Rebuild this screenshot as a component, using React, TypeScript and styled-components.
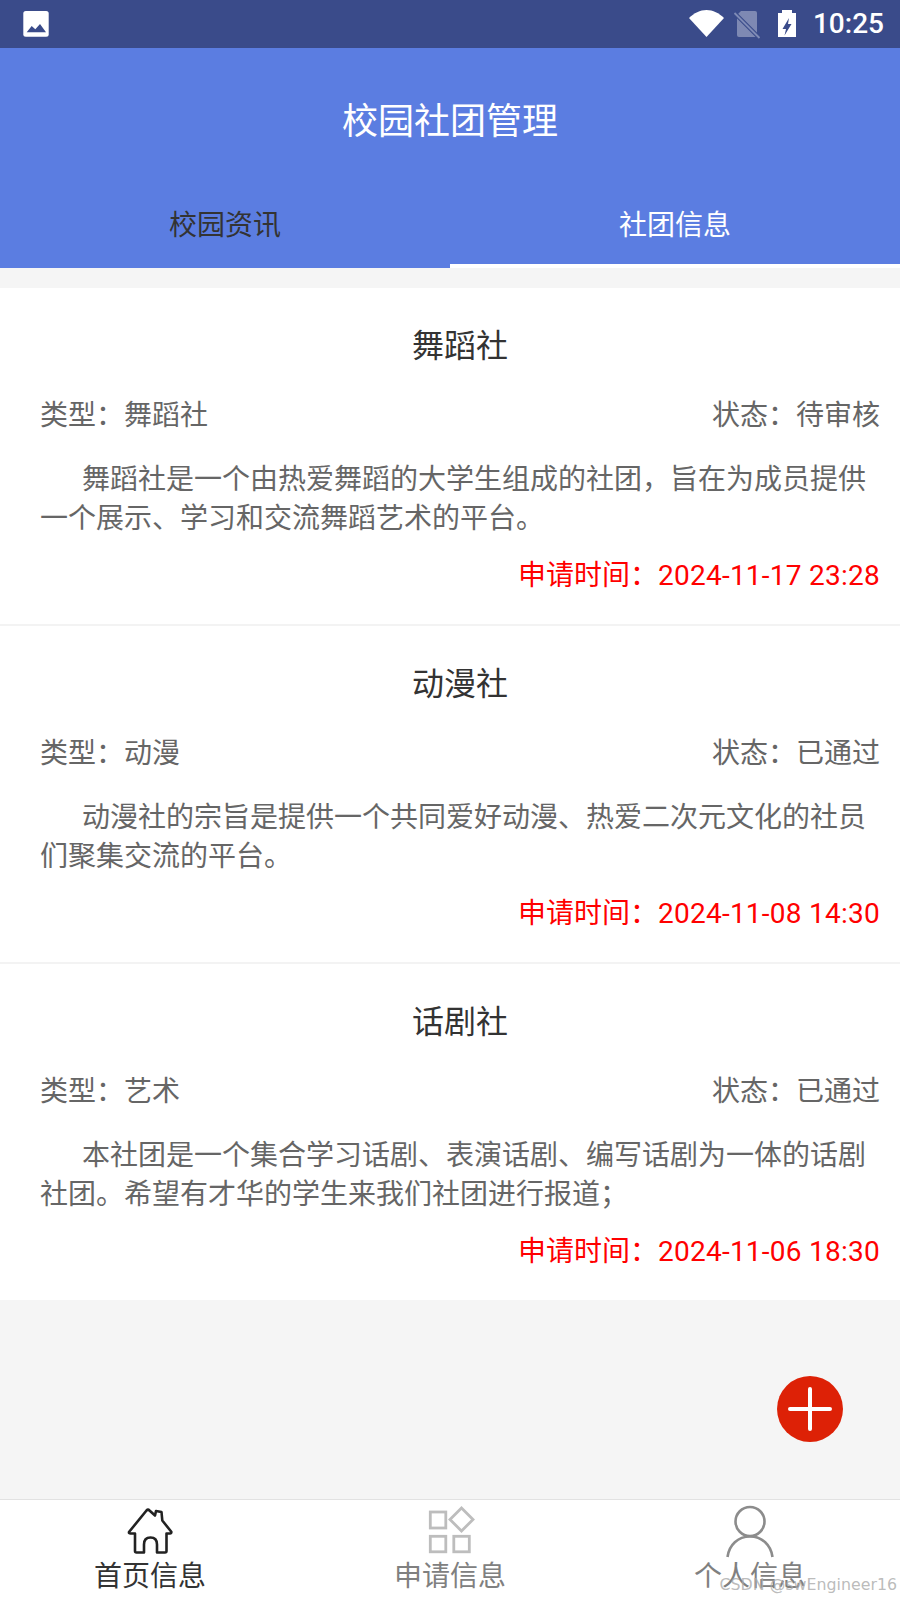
import React from "react";
import styled, { createGlobalStyle } from "styled-components";

const Global = createGlobalStyle`
  html, body { margin: 0; padding: 0; background: #f5f5f5; }
  * { box-sizing: border-box; }
`;

const Screen = styled.div`
  position: relative;
  width: 900px;
  height: 1600px;
  display: flex;
  flex-direction: column;
  overflow: hidden;
  background: #f5f5f5;
  font-family: Roboto, "Noto Sans CJK SC", sans-serif;
  font-size: 28px;
`;

const StatusBar = styled.div`
  height: 48px;
  flex: none;
  background: #3a4b8a;
  display: flex;
  align-items: center;
  justify-content: space-between;
  padding: 0 16px 0 20px;
`;

const StatusRight = styled.div`
  display: flex;
  align-items: center;
`;

const StatusIcon = styled.svg<{ $gap?: number }>`
  display: block;
  flex: none;
  margin-left: ${(p) => p.$gap ?? 0}px;
`;

const Clock = styled.span`
  color: #fff;
  font-size: 28px;
  font-weight: 500;
  line-height: 48px;
  margin-left: 17px;
`;

const Header = styled.header`
  flex: none;
  background: #5b7de1;
`;

const AppTitle = styled.h1`
  margin: 0;
  height: 144px;
  padding-bottom: 4px;
  display: flex;
  align-items: center;
  justify-content: center;
  color: #fff;
  font-size: 36px;
  font-weight: 400;
`;

const Tabs = styled.nav`
  display: flex;
  height: 76px;
`;

const Tab = styled.div<{ $active?: boolean }>`
  flex: 1;
  display: flex;
  align-items: center;
  justify-content: center;
  padding-bottom: ${(p) => (p.$active ? "10px" : "14px")};
  color: ${(p) => (p.$active ? "#fff" : "#333")};
  border-bottom: ${(p) => (p.$active ? "4px solid #fff" : "none")};
`;

const List = styled.main`
  flex: 1;
  padding-top: 20px;
`;

const Card = styled.article`
  background: #fff;
  padding: 33px 20px 28px 40px;
  & + & {
    border-top: 2px solid #f3f3f3;
  }
`;

const CardTitle = styled.h2`
  margin: 0;
  text-align: center;
  color: #333;
  font-size: 32px;
  font-weight: 400;
  line-height: 50px;
`;

const MetaRow = styled.div`
  display: flex;
  justify-content: space-between;
  margin-top: 25px;
  line-height: 40px;
  color: #666;
`;

const Description = styled.p`
  margin: 24px 0 0;
  color: #666;
  line-height: 39px;
  text-indent: 42px;
`;

const AppliedAt = styled.div`
  margin-top: 18px;
  text-align: right;
  color: #f00;
  line-height: 40px;
`;

const AppliedDate = styled.span`
  letter-spacing: 0.25px;
`;

const Fab = styled.button`
  position: absolute;
  left: 777px;
  top: 1376px;
  width: 66px;
  height: 66px;
  padding: 0;
  border: none;
  border-radius: 50%;
  background: #dd2106;
  display: flex;
  align-items: center;
  justify-content: center;
`;

const BottomBar = styled.footer`
  flex: none;
  height: 101px;
  display: flex;
  background: #fff;
  border-top: 1px solid #e2e2e2;
`;

const NavItem = styled.div<{ $active?: boolean }>`
  flex: 1;
  display: flex;
  flex-direction: column;
  align-items: center;
  color: ${(p) => (p.$active ? "#333" : "#808080")};
  line-height: 34px;
`;

const NavIcon = styled.svg`
  display: block;
  flex: none;
`;

const Watermark = styled.div`
  position: absolute;
  right: 3px;
  bottom: 3px;
  font-family: "DejaVu Sans", sans-serif;
  font-size: 15.8px;
  line-height: 24px;
  color: rgba(170, 170, 170, 0.8);
`;

const clubs = [
  {
    name: "舞蹈社",
    type: "舞蹈社",
    status: "待审核",
    desc: "舞蹈社是一个由热爱舞蹈的大学生组成的社团，旨在为成员提供一个展示、学习和交流舞蹈艺术的平台。",
    time: "2024-11-17 23:28",
  },
  {
    name: "动漫社",
    type: "动漫",
    status: "已通过",
    desc: "动漫社的宗旨是提供一个共同爱好动漫、热爱二次元文化的社员们聚集交流的平台。",
    time: "2024-11-08 14:30",
  },
  {
    name: "话剧社",
    type: "艺术",
    status: "已通过",
    desc: "本社团是一个集合学习话剧、表演话剧、编写话剧为一体的话剧社团。希望有才华的学生来我们社团进行报道；",
    time: "2024-11-06 18:30",
  },
];

export default function App() {
  return (
    <Screen>
      <Global />
      <StatusBar>
        <StatusIcon width="30" height="30" viewBox="0 0 30 30">
          <rect x="3.300" y="2" width="25.400" height="25.700" rx="2.500" fill="#fff" />
          <path d="M6.700 23.300l5-6.300 3.600 3.300 4.700-5.300 6 8.300z" fill="#3a4b8a" />
        </StatusIcon>
        <StatusRight>
          <StatusIcon width="38" height="32" viewBox="0 0 38 32">
            <path d="M1 10C6 5 12 2 18.500 2S31 5 36 10L18.500 29z" fill="#fff" />
          </StatusIcon>
          <StatusIcon $gap={7} width="28" height="32" viewBox="0 0 28 32">
            <path d="M8 3h14a2 2 0 0 1 2 2v22a2 2 0 0 1-2 2H6a2 2 0 0 1-2-2V7z" fill="#fff" opacity="0.35" />
            <path d="M1.500 5L26.500 30" stroke="#3a4b8a" strokeWidth="4" />
            <path d="M1.500 5L26.500 30" stroke="#7f8cb6" strokeWidth="1.800" />
          </StatusIcon>
          <StatusIcon $gap={17} width="18" height="32" viewBox="0 0 18 32">
            <path d="M4 2h10v3h4v24H0V5h4z" fill="#fff" />
            <path d="M11 10L4.500 21H8l-1.500 6.500L13.500 16H10z" fill="#3a4b8a" />
          </StatusIcon>
          <Clock>10:25</Clock>
        </StatusRight>
      </StatusBar>

      <Header>
        <AppTitle>校园社团管理</AppTitle>
        <Tabs>
          <Tab>校园资讯</Tab>
          <Tab $active>社团信息</Tab>
        </Tabs>
      </Header>

      <List>
        {clubs.map((c) => (
          <Card key={c.name}>
            <CardTitle>{c.name}</CardTitle>
            <MetaRow>
              <span>类型：{c.type}</span>
              <span>状态：{c.status}</span>
            </MetaRow>
            <Description>{c.desc}</Description>
            <AppliedAt>
              申请时间：<AppliedDate>{c.time}</AppliedDate>
            </AppliedAt>
          </Card>
        ))}
      </List>

      <Fab aria-label="添加">
        <svg width="44" height="44" viewBox="0 0 44 44">
          <path d="M22 2v40M2 22h40" stroke="#fff" strokeWidth="4" strokeLinecap="round" />
        </svg>
      </Fab>

      <BottomBar>
        <NavItem $active>
          <NavIcon width="60" height="60" viewBox="0 0 60 60" fill="none">
            <path
              d="M9 32l17.500-21.500q1.500-1.500 3 0L35 15.500l1-4.500 5.500 1 .8 8.500 9 11.300q.3 1.700-1.300 1.700h-3.500v17.500q0 1.500-1.500 1.500H37v-8q0-7-6.500-7t-6.500 7v8h-7.500q-1.500 0-1.500-1.500V33.500H10.500q-1.800 0-1.500-1.500z"
              stroke="#222"
              strokeWidth="2.600"
              strokeLinejoin="round"
            />
          </NavIcon>
          首页信息
        </NavItem>
        <NavItem>
          <NavIcon width="60" height="60" viewBox="0 0 60 60" fill="none" stroke="#bdbdbd" strokeWidth="2.800">
            <rect x="10.300" y="12" width="15.500" height="16" />
            <rect x="10.300" y="36.300" width="15.500" height="15.500" />
            <rect x="33.800" y="36.300" width="15.500" height="15.500" />
            <path d="M41.500 8l11.500 11.500L41.500 31 30 19.500z" />
          </NavIcon>
          申请信息
        </NavItem>
        <NavItem>
          <NavIcon width="60" height="60" viewBox="0 0 60 60" fill="none" stroke="#8c8c8c" strokeWidth="2.600">
            <circle cx="30" cy="21.500" r="14.500" />
            <path d="M7.500 57C9 45 18 36.500 30 36.500S51 45 52.500 57" />
          </NavIcon>
          个人信息
        </NavItem>
      </BottomBar>

      <Watermark>CSDN @swEngineer16</Watermark>
    </Screen>
  );
}
